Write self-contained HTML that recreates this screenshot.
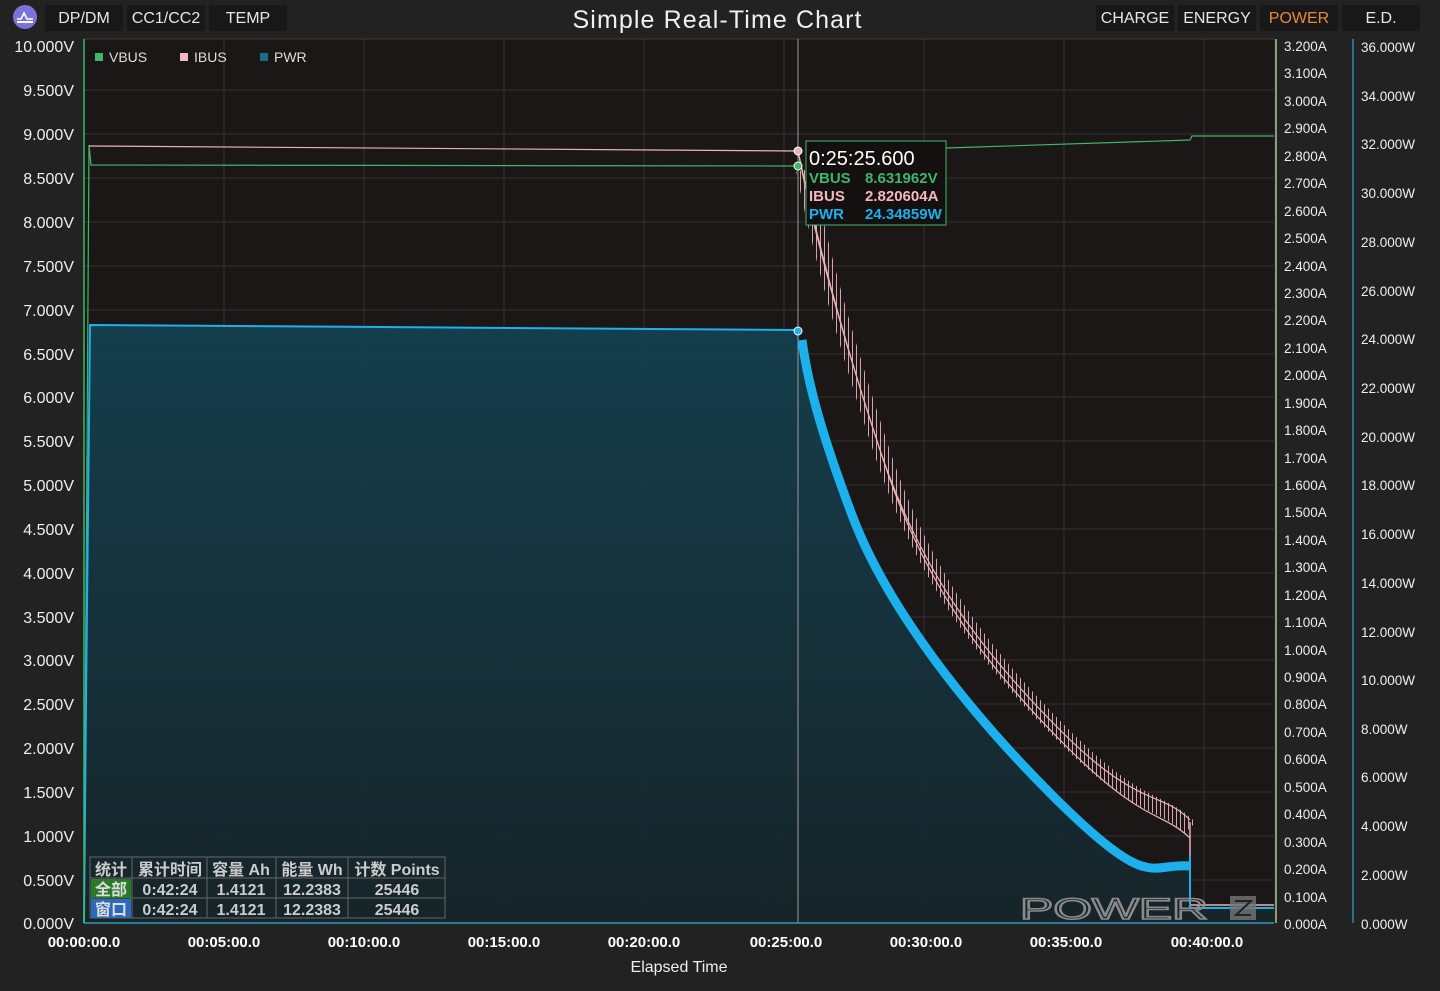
<!DOCTYPE html>
<html><head><meta charset="utf-8"><style>
html,body{margin:0;padding:0;background:#222222;}
svg{display:block;font-family:"Liberation Sans","Noto Sans CJK SC",sans-serif;}
</style></head><body>
<svg width="1440" height="991" viewBox="0 0 1440 991" xmlns="http://www.w3.org/2000/svg">
<defs>
<linearGradient id="bf" x1="0" y1="0" x2="0" y2="1">
<stop offset="0" stop-color="#14404f"/><stop offset="1" stop-color="#16252a"/></linearGradient>
<pattern id="pp" width="4" height="40" patternUnits="userSpaceOnUse"><rect x="0" width="1" height="40" fill="#d8a4a8"/></pattern>
</defs>
<rect width="1440" height="991" fill="#222"/>
<!-- top bar -->
<circle cx="25" cy="17" r="12" fill="#7b74d8"/>
<path d="M17 19 L21 19 L24 13 L27 19 L33 19" stroke="#fff" stroke-width="1.6" fill="none"/>
<rect x="17" y="21" width="16" height="2" fill="#fff"/>
<g fill="#181818"><rect x="45" y="5" width="78" height="26"/><rect x="127" y="5" width="78" height="26"/><rect x="209" y="5" width="78" height="26"/>
<rect x="1096" y="5" width="78" height="26"/><rect x="1178" y="5" width="78" height="26"/><rect x="1260" y="5" width="78" height="26"/><rect x="1342" y="5" width="78" height="26"/></g>
<g fill="#e6e6e6" font-size="16" text-anchor="middle">
<text x="84" y="23">DP/DM</text><text x="166" y="23">CC1/CC2</text><text x="248" y="23">TEMP</text>
<text x="1135" y="23">CHARGE</text><text x="1217" y="23">ENERGY</text><text x="1299" y="23" fill="#e8893a">POWER</text><text x="1381" y="23">E.D.</text></g>
<text x="717" y="28" font-size="25" fill="#f0f0f0" text-anchor="middle" textLength="289">Simple Real-Time Chart</text>
<!-- plot bg -->
<rect x="84" y="39" width="1190" height="884" fill="#1c1717"/>
<line x1="84" y1="39" x2="1274" y2="39" stroke="#4a3a34"/>
<!-- grid -->
<g stroke="#333030" stroke-width="1">
<path d="M224 39V923M364 39V923M504 39V923M644 39V923M784 39V923M924 39V923M1064 39V923M1204 39V923"/>
<path d="M84 90H1274M84 134H1274M84 178H1274M84 222H1274M84 266H1274M84 310H1274M84 354H1274M84 397H1274M84 441H1274M84 485H1274M84 529H1274M84 573H1274M84 617H1274M84 660H1274M84 704H1274M84 748H1274M84 792H1274M84 836H1274M84 880H1274"/>
</g>
<!-- blue fill -->
<path d="M84 923 L86 700 L90 325 L798 330 C805 380 820 430 850 510 S950 690 1050 790 S1150 860 1190 865 L1190 908 L1274 908 L1274 923 Z" fill="url(#bf)" opacity="0.95"/>
<!-- cursor -->
<line x1="798" y1="39" x2="798" y2="923" stroke="#999" stroke-width="1"/>
<!-- VBUS -->
<path d="M84 923 L86 600 L89 145 L91 165 L798 166" stroke="#3fb66a" stroke-width="1.2" fill="none"/>
<path d="M946 148 L1190 140 L1192 136 L1274 136" stroke="#3fb66a" stroke-width="1.2" fill="none"/>
<!-- IBUS -->
<path d="M89 146 L798 151" stroke="#e8b4b8" stroke-width="1.2" fill="none"/>
<path d="M804 170 C818 240 843 335 883 455 S983 655 1063 735 S1160 798 1190 828" stroke="url(#pp)" stroke-width="16" fill="none"/>
<path d="M798 151 C815 230 840 330 880 450 S980 650 1060 730 S1160 790 1190 820" stroke="#e8b4b8" stroke-width="1.2" fill="none"/>
<path d="M798 151 C815 240 845 345 885 465 S985 665 1065 745 S1160 810 1190 838" stroke="#e8b4b8" stroke-width="1.2" fill="none"/>
<path d="M1190 822 L1190 905 L1274 905" stroke="#e8b4b8" stroke-width="1.5" fill="none"/>
<!-- PWR -->
<path d="M84 923 L86 700 L90 325 L798 330" stroke="#1cb0ec" stroke-width="2" fill="none"/>
<path d="M802 340 C808 385 822 435 852 515 S952 695 1052 795 S1150 862 1190 866" stroke="#1cb0ec" stroke-width="9" fill="none"/>
<path d="M1190 855 L1190 908 L1274 908" stroke="#1cb0ec" stroke-width="2" fill="none"/>
<circle cx="798" cy="151" r="4" fill="#e8b4b8" stroke="#fff"/>
<circle cx="798" cy="166" r="4" fill="#3fb66a" stroke="#fff"/>
<circle cx="798" cy="331" r="4" fill="#1cb0ec" stroke="#fff"/>
<!-- legend -->
<rect x="95" y="53" width="8" height="8" fill="#3fb66a"/><text x="109" y="62" font-size="14" fill="#ddd">VBUS</text>
<rect x="180" y="53" width="8" height="8" fill="#f4b8c0"/><text x="194" y="62" font-size="14" fill="#ddd">IBUS</text>
<rect x="260" y="53" width="8" height="8" fill="#1a6a8a"/><text x="274" y="62" font-size="14" fill="#ddd">PWR</text>
<!-- tooltip -->
<rect x="806" y="141" width="140" height="84" fill="#141010" stroke="#3fb66a"/>
<text x="809" y="165" font-size="20" fill="#fff">0:25:25.600</text>
<g font-size="15" font-weight="bold"><text x="809" y="183" fill="#3fb66a">VBUS</text><text x="865" y="183" fill="#3fb66a">8.631962V</text>
<text x="809" y="201" fill="#f4b8c0">IBUS</text><text x="865" y="201" fill="#f4b8c0">2.820604A</text>
<text x="809" y="219" fill="#1cb0ec">PWR</text><text x="865" y="219" fill="#1cb0ec">24.34859W</text></g>
<!-- axes -->
<line x1="84" y1="39" x2="84" y2="923" stroke="#3fb66a" stroke-width="1.5"/>
<line x1="1276" y1="39" x2="1276" y2="923" stroke="#a8c79a" stroke-width="1.5"/>
<line x1="1353" y1="39" x2="1353" y2="923" stroke="#2a8ab8" stroke-width="1.5"/>
<line x1="84" y1="923" x2="1274" y2="923" stroke="#2a9ab8" stroke-width="1.5"/>
<g font-size="16" fill="#eee" text-anchor="end">
<text x="74" y="52">10.000V</text><text x="74" y="96">9.500V</text><text x="74" y="140">9.000V</text><text x="74" y="184">8.500V</text><text x="74" y="228">8.000V</text><text x="74" y="272">7.500V</text><text x="74" y="316">7.000V</text><text x="74" y="360">6.500V</text><text x="74" y="403">6.000V</text><text x="74" y="447">5.500V</text><text x="74" y="491">5.000V</text><text x="74" y="535">4.500V</text><text x="74" y="579">4.000V</text><text x="74" y="623">3.500V</text><text x="74" y="666">3.000V</text><text x="74" y="710">2.500V</text><text x="74" y="754">2.000V</text><text x="74" y="798">1.500V</text><text x="74" y="842">1.000V</text><text x="74" y="886">0.500V</text><text x="74" y="929">0.000V</text></g>
<g font-size="13.5" fill="#eee">
<text x="1284" y="51">3.200A</text><text x="1284" y="78">3.100A</text><text x="1284" y="106">3.000A</text><text x="1284" y="133">2.900A</text><text x="1284" y="161">2.800A</text><text x="1284" y="188">2.700A</text><text x="1284" y="216">2.600A</text><text x="1284" y="243">2.500A</text><text x="1284" y="271">2.400A</text><text x="1284" y="298">2.300A</text><text x="1284" y="325">2.200A</text><text x="1284" y="353">2.100A</text><text x="1284" y="380">2.000A</text><text x="1284" y="408">1.900A</text><text x="1284" y="435">1.800A</text><text x="1284" y="463">1.700A</text><text x="1284" y="490">1.600A</text><text x="1284" y="517">1.500A</text><text x="1284" y="545">1.400A</text><text x="1284" y="572">1.300A</text><text x="1284" y="600">1.200A</text><text x="1284" y="627">1.100A</text><text x="1284" y="655">1.000A</text><text x="1284" y="682">0.900A</text><text x="1284" y="709">0.800A</text><text x="1284" y="737">0.700A</text><text x="1284" y="764">0.600A</text><text x="1284" y="792">0.500A</text><text x="1284" y="819">0.400A</text><text x="1284" y="847">0.300A</text><text x="1284" y="874">0.200A</text><text x="1284" y="902">0.100A</text><text x="1284" y="929">0.000A</text>
<text x="1361" y="52">36.000W</text><text x="1361" y="101">34.000W</text><text x="1361" y="149">32.000W</text><text x="1361" y="198">30.000W</text><text x="1361" y="247">28.000W</text><text x="1361" y="296">26.000W</text><text x="1361" y="344">24.000W</text><text x="1361" y="393">22.000W</text><text x="1361" y="442">20.000W</text><text x="1361" y="490">18.000W</text><text x="1361" y="539">16.000W</text><text x="1361" y="588">14.000W</text><text x="1361" y="637">12.000W</text><text x="1361" y="685">10.000W</text><text x="1361" y="734">8.000W</text><text x="1361" y="782">6.000W</text><text x="1361" y="831">4.000W</text><text x="1361" y="880">2.000W</text><text x="1361" y="929">0.000W</text></g>
<g font-size="15" font-weight="bold" fill="#fff" text-anchor="middle">
<text x="84" y="947">00:00:00.0</text><text x="224" y="947">00:05:00.0</text><text x="364" y="947">00:10:00.0</text><text x="504" y="947">00:15:00.0</text><text x="644" y="947">00:20:00.0</text><text x="786" y="947">00:25:00.0</text><text x="926" y="947">00:30:00.0</text><text x="1066" y="947">00:35:00.0</text><text x="1207" y="947">00:40:00.0</text></g>
<text x="679" y="972" font-size="16" fill="#eee" text-anchor="middle">Elapsed Time</text>
<!-- stats -->
<g stroke="#666" fill="none" stroke-width="1"><rect x="90" y="857" width="355" height="61"/>
<path d="M90 878H445M90 898H445M132 857V918M207 857V918M276 857V918M348 857V918"/></g>
<rect x="91" y="879" width="40" height="19" fill="#2a7a2a"/><rect x="91" y="899" width="40" height="19" fill="#2a6ab8"/>
<g font-size="16" font-weight="bold" fill="#ccc" text-anchor="middle">
<text x="111" y="875">统计</text><text x="170" y="875">累计时间</text><text x="241" y="875">容量 Ah</text><text x="312" y="875">能量 Wh</text><text x="397" y="875">计数 Points</text>
<text x="111" y="895" fill="#ddd">全部</text><text x="170" y="895">0:42:24</text><text x="241" y="895">1.4121</text><text x="312" y="895">12.2383</text><text x="397" y="895">25446</text>
<text x="111" y="915" fill="#ddd">窗口</text><text x="170" y="915">0:42:24</text><text x="241" y="915">1.4121</text><text x="312" y="915">12.2383</text><text x="397" y="915">25446</text></g>
<!-- watermark -->
<text x="1020" y="919" font-size="30" fill="none" stroke="#8a8a8a" stroke-width="1.6" textLength="188" lengthAdjust="spacingAndGlyphs">POWER</text>
<rect x="1230" y="896" width="26" height="24" fill="#777" opacity="0.8"/>
<path d="M1235 901H1251L1236 915H1251" stroke="#222" stroke-width="2" fill="none"/>
</svg>
</body></html>
